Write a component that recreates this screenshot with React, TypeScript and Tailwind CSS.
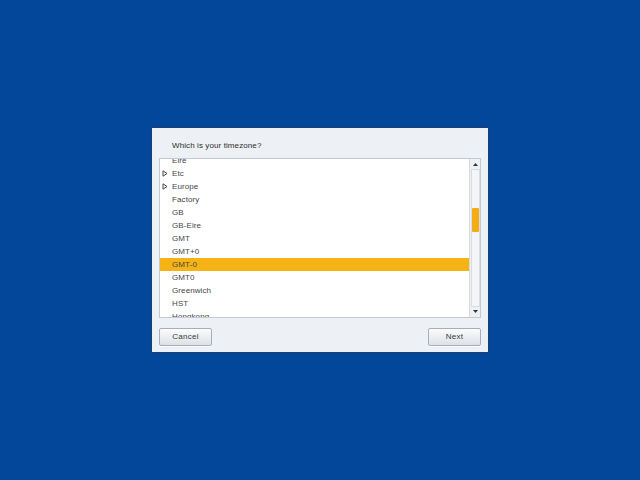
import React from 'react';

const zones = [
  { name: 'Eire' },
  { name: 'Etc', group: true },
  { name: 'Europe', group: true },
  { name: 'Factory' },
  { name: 'GB' },
  { name: 'GB-Eire' },
  { name: 'GMT' },
  { name: 'GMT+0' },
  { name: 'GMT-0' },
  { name: 'GMT0' },
  { name: 'Greenwich' },
  { name: 'HST' },
  { name: 'Hongkong' },
];

const selected = 'GMT-0';

const Expander: React.FC = () => (
  <svg width="6" height="7" viewBox="0 0 6 7" className="absolute left-[2px] top-[3px]">
    <path d="M1 0.8 L5 3.5 L1 6.2 Z" fill="none" stroke="#444" strokeWidth="1" />
  </svg>
);

const Button: React.FC<{ label: string }> = ({ label }) => (
  <button className="w-[53px] h-[18px] rounded-[2px] border border-[#a7aeb7] bg-gradient-to-b from-[#fbfcfd] to-[#dde1e6] text-[8px] text-[#3a3a3a] leading-none tracking-[0.3px] shadow-[0_1px_0_rgba(255,255,255,0.7)]">
    {label}
  </button>
);

const ScrollBar: React.FC = () => (
  <div className="w-[11px] h-full border-l border-[#d5dae0] bg-[#eef1f4] flex flex-col items-center py-[1px]">
    <div className="h-[9px] w-[9px] flex items-center justify-center">
      <svg width="5" height="3" viewBox="0 0 5 3">
        <path d="M0 3 L2.5 0 L5 3 Z" fill="#333" />
      </svg>
    </div>
    <div className="flex-1 w-[9px] border border-[#d8dde3] bg-[#f3f5f7] relative">
      <div className="absolute left-0 right-0 top-[38px] h-[24px] bg-[#f3ac14] rounded-[1px]" />
    </div>
    <div className="h-[9px] w-[9px] flex items-center justify-center">
      <svg width="5" height="3" viewBox="0 0 5 3">
        <path d="M0 0 L2.5 3 L5 0 Z" fill="#333" />
      </svg>
    </div>
  </div>
);

export default function App() {
  return (
    <div
      className="w-[640px] h-[480px] bg-[#02479a] flex items-center justify-center"
      style={{ fontFamily: '"Liberation Sans", Arial, sans-serif' }}
    >
      <div className="w-[338px] h-[226px] bg-[#edf0f4] border border-[#1b3f73] flex flex-col px-[7px] pb-[6px]">
        <div className="h-[30px] pl-[13px] pt-[14px] text-[8px] leading-none text-[#2e2e2e] tracking-[0.1px]">
          Which is your timezone?
        </div>
        <div className="h-[160px] bg-white border border-[#c3c9d1] flex overflow-hidden">
          <div className="flex-1 overflow-hidden">
            <div className="-mt-[5px]">
              {zones.map((z) => (
                <div
                  key={z.name}
                  className={
                    'relative h-[13px] pl-[12px] text-[8px] leading-[13px] text-[#464646] tracking-[0.1px] ' +
                    (z.name === selected ? 'bg-[#f5b316]' : '')
                  }
                >
                  {z.group && <Expander />}
                  {z.name}
                </div>
              ))}
            </div>
          </div>
          <ScrollBar />
        </div>
        <div className="flex-1 flex items-end justify-between">
          <Button label="Cancel" />
          <Button label="Next" />
        </div>
      </div>
    </div>
  );
}
